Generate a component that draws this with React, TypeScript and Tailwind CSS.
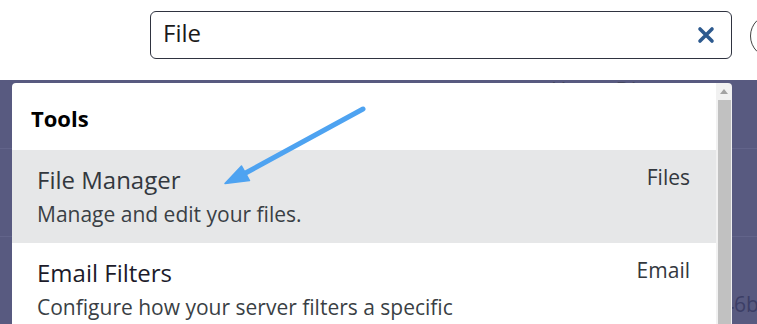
import React from 'react';

const items = [
  { title: 'File Manager', desc: 'Manage and edit your files.', tag: 'Files', active: true },
  { title: 'Email Filters', desc: 'Configure how your server filters a specific', tag: 'Email', active: false },
];

function ClearIcon() {
  return (
    <svg width="18" height="18" viewBox="0 0 18 18" fill="none">
      <path d="M3 3 L15 15 M15 3 L3 15" stroke="#2d5a8f" strokeWidth="3.6" strokeLinecap="round" />
    </svg>
  );
}

function Arrow() {
  // annotation arrow drawn on top of the screenshot
  return (
    <svg className="absolute left-0 top-0 pointer-events-none" width="757" height="324" viewBox="0 0 757 324">
      <line x1="363" y1="109" x2="240" y2="176" stroke="#4ea3f1" strokeWidth="5" strokeLinecap="round" />
      <path d="M225 183.5 L241.5 166 L246 174 L249.5 180.5 Z" fill="#4ea3f1" stroke="#4ea3f1" strokeWidth="1.5" strokeLinejoin="round" />
    </svg>
  );
}

export default function App() {
  return (
    <div className="relative w-[757px] h-[324px] overflow-hidden bg-white" style={{ fontFamily: '"Open Sans", sans-serif' }}>
      {/* header with search */}
      <div className="h-[80px] flex items-start pt-[11px] pl-[150px] gap-[18px]">
        <div className="w-[582px] h-[48px] shrink-0 border border-[#2f3340] rounded-[6px] flex items-center pl-[12px] pr-[16px] justify-between">
          <span className="text-[24px] leading-[32px] mb-[4px] text-[#1a1a1a]">File</span>
          <ClearIcon />
        </div>
        <div className="w-[44px] h-[44px] shrink-0 rounded-full border border-[#444] mt-[3px]" />
      </div>

      {/* page body behind the dropdown */}
      <div className="relative h-[244px] bg-[#585a80] flex flex-col">
        <div className="h-[69px] shrink-0 border-b border-[#62648a] pl-[551px] flex items-start">
          <span className="text-[21px] leading-[26px] -mt-[3px] text-[#44465e] whitespace-nowrap">Home Directory</span>
        </div>
        <div className="h-[88px] shrink-0 border-b border-[#62648a]" />
        <div className="pl-[722px] pt-[54px]">
          <span className="block text-[21px] leading-[26px] text-[#3c3e66]">46b</span>
        </div>

        {/* dropdown */}
        <div className="absolute left-[12px] top-[3px] w-[720px] h-[260px] flex rounded-t-[4px] overflow-hidden">
          <div className="flex-1 bg-white">
            <div className="h-[67px] pl-[19px] pt-[21px]">
              <div className="text-[22px] leading-[28px] font-bold text-black">Tools</div>
            </div>
            {items.map((it) => (
              <div
                key={it.title}
                className={`h-[93px] flex justify-between pl-[25px] pr-[26px] ${it.active ? 'bg-[#e6e7e8]' : 'bg-white'}`}
              >
                <div className="pt-[15px]">
                  <div className={`text-[24px] leading-[30px] ${it.active ? 'text-[#33383e]' : 'text-[#1c1b2a]'}`}>{it.title}</div>
                  <div className="mt-[6px] text-[21px] leading-[26px] text-[#3a3f45] whitespace-nowrap">{it.desc}</div>
                </div>
                <div className="pt-[12px] text-[21px] leading-[30px] text-[#33383e]">{it.tag}</div>
              </div>
            ))}
          </div>
          <div className="w-[16px] bg-[#f1f1f1] flex flex-col items-center">
            <div className="h-[17px] flex items-center justify-center">
              <div className="w-0 h-0 border-l-[4px] border-r-[4px] border-b-[5px] border-l-transparent border-r-transparent border-b-[#a3a3a3]" />
            </div>
            <div className="w-[13px] flex-1 bg-[#c1c1c1]" />
          </div>
        </div>
      </div>

      <Arrow />
    </div>
  );
}
